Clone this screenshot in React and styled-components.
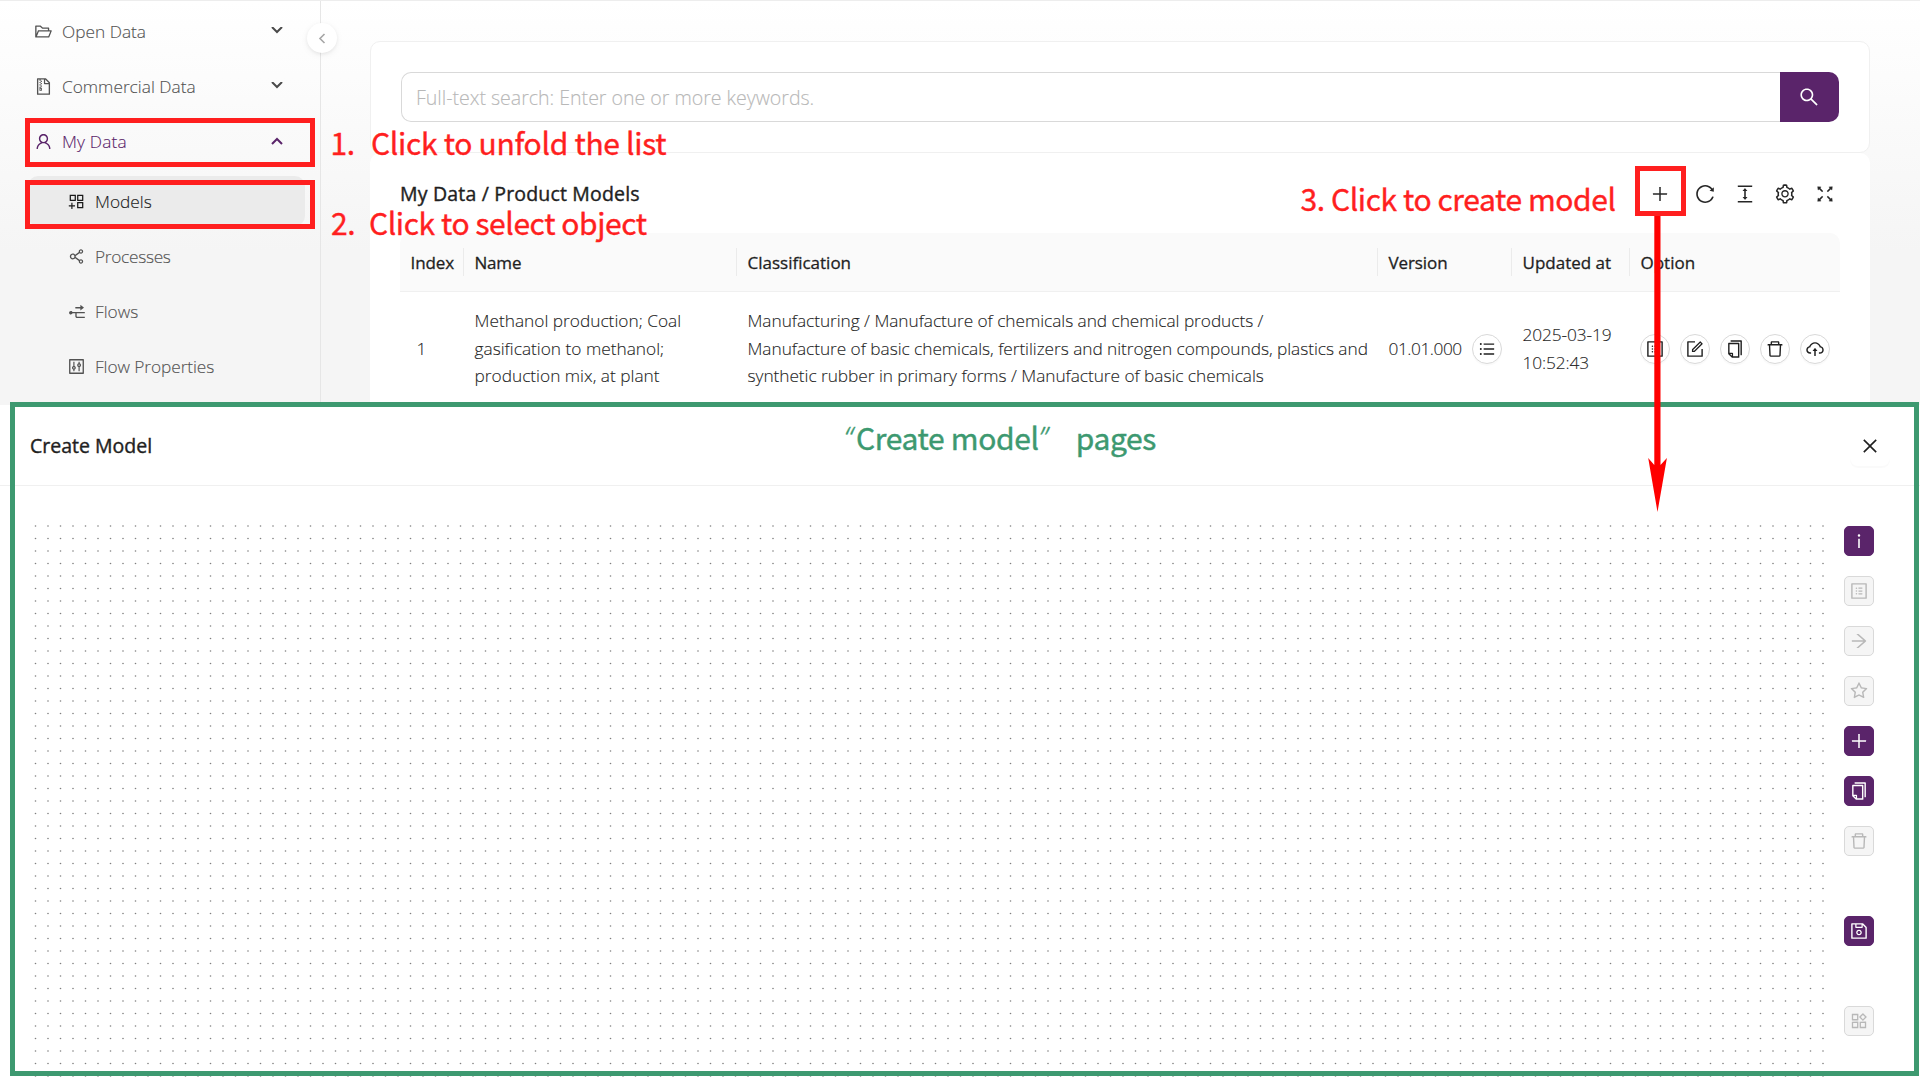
import React from "react";
import styled, { createGlobalStyle, css } from "styled-components";
import {
  AiOutlineFolderOpen,
  AiOutlineFileZip,
  AiOutlineUser,
  AiOutlineAppstoreAdd,
  AiOutlineShareAlt,
  AiOutlineNodeExpand,
  AiOutlineControl,
  AiOutlineSearch,
  AiOutlinePlus,
  AiOutlineReload,
  AiOutlineColumnHeight,
  AiOutlineSetting,
  AiOutlineFullscreen,
  AiOutlineUnorderedList,
  AiOutlineProfile,
  AiOutlineForm,
  AiOutlineCopy,
  AiOutlineDelete,
  AiOutlineCloudUpload,
  AiOutlineClose,
  AiOutlineInfo,
  AiOutlineArrowRight,
  AiOutlineStar,
  AiOutlineSave,
  AiOutlineProduct,
} from "react-icons/ai";

const PRIMARY = "#5a246a";
const RED = "#ff1f1f";
const GREEN = "#3d9970";

const GlobalStyle = createGlobalStyle`
  * { box-sizing: border-box; }
  body {
    margin: 0;
    background: #fff;
    font-family: "Open Sans", "Noto Sans", sans-serif;
    font-size: 17.3px;
    font-weight: 300;
    color: #1f1f1f;
    -webkit-text-stroke: 0.12px currentColor;
  }
  button { font: inherit; padding: 0; cursor: pointer; }
  svg { display: block; flex: none; }
`;

const Page = styled.div`
  position: relative;
  width: 1920px;
  height: 1078px;
  overflow: hidden;
`;

const Workspace = styled.div`
  display: flex;
  height: 405px;
  overflow: hidden;
  border-top: 1px solid #ededed;
  background: linear-gradient(#ffffff, #f5f5f5 62%);
`;

/* ---------- sidebar ---------- */

const Sidebar = styled.nav`
  position: relative;
  display: flex;
  flex-direction: column;
  gap: 5px;
  width: 321px;
  flex: none;
  padding: 5px 15px 0 28px;
  border-right: 1px solid #e6e6e6;
`;

const MenuItem = styled.a`
  display: flex;
  align-items: center;
  height: 50px;
  flex: none;
  gap: 9px;
  padding: 0 22px 0 6px;
  border-radius: 10px;
  color: ${(p) => (p.$open ? PRIMARY : "#525252")};
`;

const MenuLabel = styled.span`
  flex: 1;
  padding-top: 1px;
  line-height: 28px;
  letter-spacing: ${(p) => p.$track || 0}px;
`;

const SubMenu = styled.div`
  display: flex;
  flex-direction: column;
  gap: 5px;
  padding-top: 5px;
`;

const SubItem = styled(MenuItem)`
  padding-left: 39px;
  ${(p) =>
    p.$selected &&
    css`
      background: #ebebeb;
      color: #1a1a1a;
    `}
`;

const CollapseButton = styled.button`
  position: absolute;
  right: -17px;
  top: 22px;
  display: grid;
  place-items: center;
  width: 30px;
  height: 30px;
  border: 0;
  border-radius: 50%;
  background: #fff;
  color: #a6a6a6;
  box-shadow: 0 2px 8px -2px rgba(0, 0, 0, 0.1), 0 1px 4px -1px rgba(25, 15, 15, 0.08);
`;

/* ---------- content ---------- */

const Content = styled.main`
  display: flex;
  flex-direction: column;
  width: 1500px;
  margin: 40px 0 0 49px;
`;

const SearchCard = styled.section`
  display: flex;
  height: 112px;
  flex: none;
  padding: 30px;
  border: 1px solid #f0f0f0;
  border-radius: 10px;
  background: #fff;
`;

const SearchInput = styled.div`
  display: flex;
  align-items: center;
  flex: 1;
  height: 50px;
  padding: 1px 14px 0;
  border: 1px solid #d9d9d9;
  border-right: 0;
  border-radius: 10px 0 0 10px;
  color: #b8b8b8;
  font-size: 19.6px;
  letter-spacing: -0.03px;
`;

const SearchButton = styled.button`
  display: grid;
  place-items: center;
  width: 59px;
  height: 50px;
  padding-right: 1px;
  border: 0;
  border-radius: 0 10px 10px 0;
  background: ${PRIMARY};
  color: #fff;
`;

const TableCard = styled.section`
  height: 300px;
  flex: none;
  padding: 0 30px;
  border-radius: 10px;
  background: #fff;
`;

const TableToolbar = styled.header`
  display: flex;
  align-items: center;
  justify-content: space-between;
  height: 80px;
  padding-top: 2px;
`;

const Heading = styled.h2`
  margin: 0;
  font-size: 19.5px;
  font-weight: 400;
  line-height: 30px;
  letter-spacing: ${(p) => p.$track || 0}px;
  -webkit-text-stroke: 0.4px currentColor;
`;

const ToolGroup = styled.div`
  display: flex;
  gap: 18px;
  padding-right: 4px;
`;

const ToolIcon = styled.button`
  display: grid;
  place-items: center;
  width: 22px;
  height: 22px;
  border: 0;
  background: none;
  color: #262626;
  margin-right: ${(p) => (p.$wide ? "5px" : 0)};
`;

const Row = styled.div`
  display: grid;
  grid-template-columns: 64px 273px 641px 134px 118px 210px;
  align-items: center;
`;

const HeadRow = styled(Row)`
  height: 59px;
  background: #fafafa;
  border-bottom: 1px solid #f0f0f0;
  border-radius: 10px 10px 0 0;
  font-size: 17px;
  font-weight: 400;
  -webkit-text-stroke: 0.3px currentColor;
`;

const HeadCell = styled.div`
  display: flex;
  align-items: center;
  height: 28px;
  padding: 0 0 0 10.5px;
  border-right: ${(p) => (p.$last ? 0 : "1px solid #ebebeb")};
  letter-spacing: ${(p) => p.$track || 0}px;
  white-space: nowrap;
`;

const BodyRow = styled(Row)`
  height: 113px;
`;

const Cell = styled.div`
  display: flex;
  align-items: center;
  gap: 10px;
  padding-left: ${(p) => p.$inset || 10.5}px;
  line-height: 27.5px;
  letter-spacing: ${(p) => p.$track || 0}px;
  white-space: nowrap;
`;

const RoundButton = styled.button`
  display: grid;
  place-items: center;
  width: 30px;
  height: 30px;
  flex: none;
  border: 1px solid #d9d9d9;
  border-radius: 50%;
  background: #fff;
  color: #1f1f1f;
  box-shadow: 0 2px 0 rgba(0, 0, 0, 0.02);
`;

/* ---------- drawer ---------- */

const Drawer = styled.section`
  display: flex;
  flex-direction: column;
  height: 673px;
  background: #fff;
`;

const DrawerHeader = styled.header`
  display: flex;
  align-items: center;
  justify-content: space-between;
  height: 81px;
  flex: none;
  padding: 2px 30px 0 30px;
  border-bottom: 1px solid #f0f0f0;
`;

const CloseButton = styled.button`
  display: grid;
  place-items: center;
  width: 40px;
  height: 40px;
  border: 0;
  border-radius: 8px;
  background: #fff;
  color: #1f1f1f;
  box-shadow: 0 2px 0 rgba(0, 0, 0, 0.02);
`;

const DrawerBody = styled.div`
  display: flex;
  gap: 14px;
  flex: 1;
  padding: 34px 0 0 30px;
`;

const Canvas = styled.svg`
  width: 1800px;
  height: 558px;
`;

const SideTools = styled.div`
  display: flex;
  flex-direction: column;
  gap: 20px;
  padding-top: 6px;
`;

const SideButton = styled.button`
  display: grid;
  place-items: center;
  width: 30px;
  height: 30px;
  flex: none;
  margin-top: ${(p) => p.$push || 0}px;
  border: 1px solid ${(p) => (p.$active ? PRIMARY : "#d9d9d9")};
  border-radius: 5px;
  background: ${(p) => (p.$active ? PRIMARY : "#f5f5f5")};
  color: ${(p) => (p.$active ? "#fff" : "#b8b8b8")};
`;

/* ---------- annotations lying over the screens ---------- */

const Frame = styled.div`
  position: absolute;
  left: ${(p) => p.$x}px;
  top: ${(p) => p.$y}px;
  width: ${(p) => p.$w}px;
  height: ${(p) => p.$h}px;
  border: 5px solid ${(p) => p.$tone || RED};
  pointer-events: none;
`;

const Note = styled.div`
  position: absolute;
  left: ${(p) => p.$x}px;
  top: ${(p) => p.$y}px;
  display: flex;
  color: ${(p) => p.$tone || RED};
  font-family: "Noto Sans CJK SC", "Open Sans", sans-serif;
  font-size: 30px;
  font-weight: 400;
  line-height: 40px;
  letter-spacing: ${(p) => p.$track}px;
  -webkit-text-stroke: 0.4px currentColor;
  white-space: pre;
`;

const NoteNumber = styled.span`
  width: ${(p) => p.$w}px;
`;

const Quote = styled.span`
  width: ${(p) => p.$w}px;
  font-family: "Open Sans", sans-serif;
  font-style: italic;
  font-size: 30px;
  font-weight: 300;
  letter-spacing: 0;
`;

const Arrow = styled.svg`
  position: absolute;
  left: 1646.5px;
  top: 214px;
`;

const Chevron = ({ up }) => (
  <svg width="12" height="8" viewBox="0 0 12 8" fill="none" stroke={up ? PRIMARY : "#4a4a4a"} strokeWidth="2">
    <path d={up ? "M1 7 6 2l5 5" : "M1 0l5 5 5-5"} />
  </svg>
);

const mainMenu = [
  { label: "Open Data", Icon: AiOutlineFolderOpen },
  { label: "Commercial Data", Icon: AiOutlineFileZip },
  { label: "My Data", Icon: AiOutlineUser, open: true, track: 0.15 },
];

const subMenu = [
  { label: "Models", Icon: AiOutlineAppstoreAdd, selected: true },
  { label: "Processes", Icon: AiOutlineShareAlt, track: -0.3 },
  { label: "Flows", Icon: AiOutlineNodeExpand },
  { label: "Flow Properties", Icon: AiOutlineControl, track: -0.08 },
];

const columns = [
  { label: "Index", track: -0.1 },
  { label: "Name", track: -0.2 },
  { label: "Classification", track: 0 },
  { label: "Version", track: -0.1 },
  { label: "Updated at", track: 0 },
  { label: "Option", track: 0 },
];

const rowActions = [AiOutlineProfile, AiOutlineForm, AiOutlineCopy, AiOutlineDelete, AiOutlineCloudUpload];

const sideTools = [
  { Icon: AiOutlineInfo, active: true },
  { Icon: AiOutlineProfile },
  { Icon: AiOutlineArrowRight },
  { Icon: AiOutlineStar },
  { Icon: AiOutlinePlus, active: true },
  { Icon: AiOutlineCopy, active: true },
  { Icon: AiOutlineDelete },
  { Icon: AiOutlineSave, active: true, push: 40 },
  { Icon: AiOutlineProduct, push: 40 },
];

export default function App() {
  return (
    <Page>
      <GlobalStyle />
      <Workspace>
        <Sidebar>
          {mainMenu.map(({ label, Icon, open, track }) => (
            <MenuItem key={label} $open={open}>
              <Icon size={19} />
              <MenuLabel $track={track}>{label}</MenuLabel>
              <Chevron up={open} />
            </MenuItem>
          ))}
          <SubMenu>
            {subMenu.map(({ label, Icon, selected, track }) => (
              <SubItem key={label} $selected={selected}>
                <Icon size={19} />
                <MenuLabel $track={track}>{label}</MenuLabel>
              </SubItem>
            ))}
          </SubMenu>
          <CollapseButton aria-label="Collapse">
            <svg width="8" height="12" viewBox="0 0 8 12" fill="none" stroke="currentColor" strokeWidth="1.6">
              <path d="M6.5 2 2 6.5l4.5 4.5" />
            </svg>
          </CollapseButton>
        </Sidebar>

        <Content>
          <SearchCard>
            <SearchInput>Full-text search: Enter one or more keywords.</SearchInput>
            <SearchButton aria-label="Search">
              <AiOutlineSearch size={22} />
            </SearchButton>
          </SearchCard>

          <TableCard>
            <TableToolbar>
              <Heading $track={0.18}>My Data / Product Models</Heading>
              <ToolGroup>
                <ToolIcon $wide><AiOutlinePlus size={20} /></ToolIcon>
                <ToolIcon><AiOutlineReload size={22} /></ToolIcon>
                <ToolIcon><AiOutlineColumnHeight size={22} /></ToolIcon>
                <ToolIcon><AiOutlineSetting size={22} /></ToolIcon>
                <ToolIcon><AiOutlineFullscreen size={22} /></ToolIcon>
              </ToolGroup>
            </TableToolbar>

            <HeadRow>
              {columns.map(({ label, track }, i) => (
                <HeadCell key={label} $track={track} $last={i === columns.length - 1}>
                  {label}
                </HeadCell>
              ))}
            </HeadRow>
            <BodyRow>
              <Cell $inset={16.5}>1</Cell>
              <Cell>
                Methanol production; Coal
                <br />
                gasification to methanol;
                <br />
                production mix, at plant
              </Cell>
              <Cell $track={-0.05}>
                Manufacturing / Manufacture of chemicals and chemical products /
                <br />
                Manufacture of basic chemicals, fertilizers and nitrogen compounds, plastics and
                <br />
                synthetic rubber in primary forms / Manufacture of basic chemicals
              </Cell>
              <Cell $track={-0.45}>
                01.01.000
                <RoundButton><AiOutlineUnorderedList size={18} /></RoundButton>
              </Cell>
              <Cell $track={-0.1}>
                2025-03-19
                <br />
                10:52:43
              </Cell>
              <Cell $inset={10}>
                {rowActions.map((Icon, i) => (
                  <RoundButton key={i}><Icon size={20} /></RoundButton>
                ))}
              </Cell>
            </BodyRow>
          </TableCard>
        </Content>
      </Workspace>

      <Drawer>
        <DrawerHeader>
          <Heading>Create Model</Heading>
          <CloseButton aria-label="Close"><AiOutlineClose size={20} /></CloseButton>
        </DrawerHeader>
        <DrawerBody>
          <Canvas>
            <defs>
              <pattern id="dots" width="25" height="25" patternUnits="userSpaceOnUse">
                <g fill="#808080">
                  <circle cx="5.5" cy="6" r="0.8" />
                  <circle cx="18" cy="6" r="0.8" />
                  <circle cx="5.5" cy="18.5" r="0.8" />
                  <circle cx="18" cy="18.5" r="0.8" />
                </g>
              </pattern>
            </defs>
            <rect width="1800" height="558" fill="url(#dots)" />
          </Canvas>
          <SideTools>
            {sideTools.map(({ Icon, active, push }, i) => (
              <SideButton key={i} $active={active} $push={push}>
                <Icon size={20} />
              </SideButton>
            ))}
          </SideTools>
        </DrawerBody>
      </Drawer>

      <Frame $x={10} $y={402} $w={1909} $h={674} $tone={GREEN} />
      <Frame $x={25} $y={118} $w={290} $h={49} />
      <Frame $x={25} $y={180} $w={290} $h={49} />
      <Frame $x={1635} $y={166} $w={51} $h={50} />
      <Arrow width="21" height="300" viewBox="0 0 21 300" fill="#ff0000">
        <path d="M7.3 2h6.2v249l6.4-7L10.5 298 1.2 244l6.1 7z" />
      </Arrow>

      <Note $x={330.5} $y={122} $track={-0.3}>
        <NoteNumber $w={40.5}>1.</NoteNumber>
        Click to unfold the list
      </Note>
      <Note $x={331} $y={202} $track={-0.42}>
        <NoteNumber $w={38}>2.</NoteNumber>
        Click to select object
      </Note>
      <Note $x={1300.5} $y={178} $track={-0.42}>
        <NoteNumber $w={30.5}>3.</NoteNumber>
        Click to create model
      </Note>
      <Note $x={844} $y={417} $track={-0.36} $tone={GREEN}>
        <Quote $w={12}>“</Quote>
        Create model
        <Quote $w={37}>”</Quote>
        pages
      </Note>
    </Page>
  );
}
